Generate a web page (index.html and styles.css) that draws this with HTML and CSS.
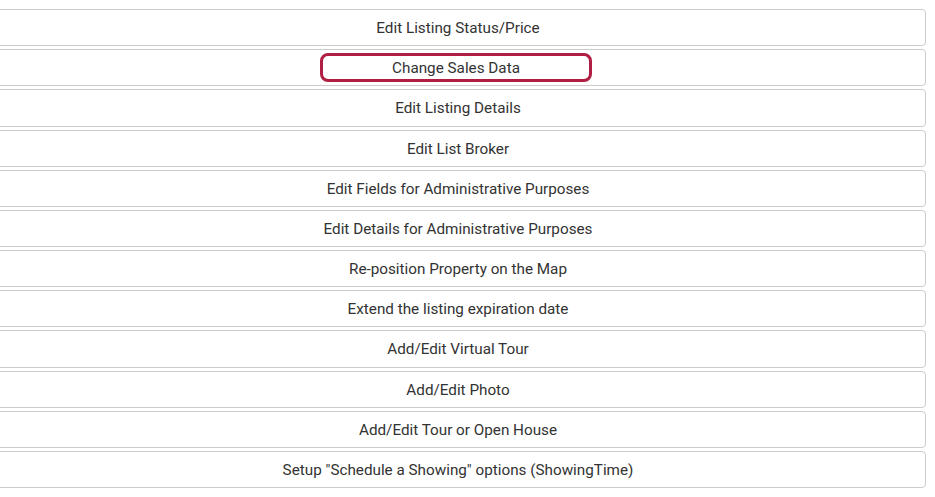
FILE: index.html
```html
<!DOCTYPE html>
<html>
<head>
<meta charset="utf-8">
<link rel="stylesheet" href="styles.css">
</head>
<body>
<div class="menu">
  <button class="item">Edit Listing Status/Price</button>
  <button class="item"><span class="focus">Change Sales Data</span></button>
  <button class="item">Edit Listing Details</button>
  <button class="item">Edit List Broker</button>
  <button class="item">Edit Fields for Administrative Purposes</button>
  <button class="item">Edit Details for Administrative Purposes</button>
  <button class="item">Re-position Property on the Map</button>
  <button class="item">Extend the listing expiration date</button>
  <button class="item">Add/Edit Virtual Tour</button>
  <button class="item">Add/Edit Photo</button>
  <button class="item">Add/Edit Tour or Open House</button>
  <button class="item">Setup "Schedule a Showing" options (ShowingTime)</button>
</div>
</body>
</html>
```
FILE: styles.css
```css
html, body {
  margin: 0;
  padding: 0;
  background: #fff;
  overflow: hidden;
}
.menu {
  display: flex;
  flex-direction: column;
  gap: 3px;
  margin: 9px 0 0 -10px;
  width: 936px;
}
.item {
  box-sizing: border-box;
  height: 37.18px;
  width: 100%;
  display: flex;
  align-items: center;
  justify-content: center;
  background: #fff;
  border: 1px solid #cccccc;
  border-radius: 4px;
  font-family: Roboto, "Liberation Sans", sans-serif;
  font-size: 15.25px;
  color: #333333;
  padding: 1px 0 0 0;
  margin: 0;
}
.focus {
  box-sizing: border-box;
  display: flex;
  align-items: center;
  justify-content: center;
  width: 272px;
  height: 29px;
  margin-top: -1px;
  border: 3px solid #b01e44;
  border-radius: 8px;
  margin-right: 4px;
}
```
